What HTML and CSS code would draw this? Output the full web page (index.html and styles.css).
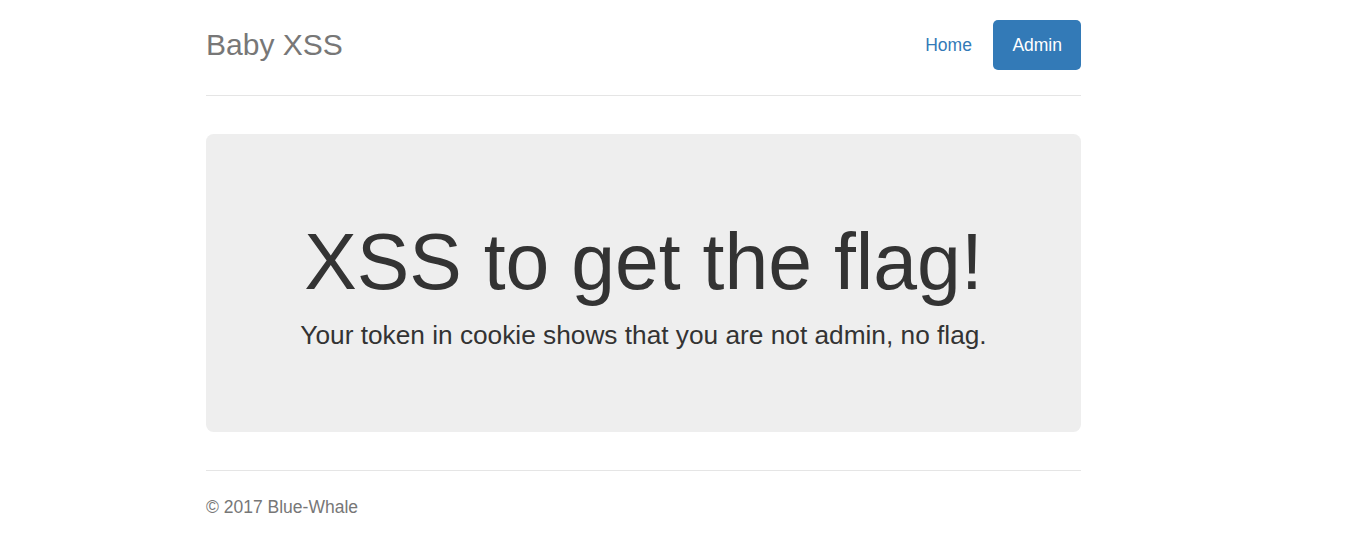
FILE: index.html
```html
<!DOCTYPE html>
<html lang="en">
<head>
<meta charset="utf-8">
<title>Baby XSS</title>
<link rel="stylesheet" href="styles.css">
</head>
<body>
<div class="container">
  <div class="header">
    <h3 class="brand">Baby XSS</h3>
    <ul class="nav-pills">
      <li><a class="pill" href="#">Home</a></li>
      <li><a class="pill active" href="#">Admin</a></li>
    </ul>
  </div>
  <div class="jumbotron">
    <h1 class="headline">XSS to get the flag!</h1>
    <p class="lead">Your token in cookie shows that you are not admin, no flag.</p>
  </div>
  <footer class="footer">
    <p class="copy">&copy; 2017 Blue-Whale</p>
  </footer>
</div>
</body>
</html>
```
FILE: styles.css
```css
* { box-sizing: border-box; }
html, body {
  margin: 0;
  padding: 0;
  background: #fff;
}
body {
  font-family: "Liberation Sans", Arial, Helvetica, sans-serif;
  font-size: 17.5px;
  line-height: 1.42857;
  color: #333;
  padding-top: 20px;
  padding-bottom: 25px;
}
.container {
  width: 875px;
  margin-left: 206px;
}
.header {
  display: flex;
  justify-content: space-between;
  align-items: flex-start;
  padding-bottom: 25px;
  border-bottom: 1px solid #e5e5e5;
  margin-bottom: 37.5px;
}
.brand {
  margin: 0;
  font-size: 30px;
  font-weight: 500;
  line-height: 50px;
  color: #777;
}
.nav-pills {
  display: flex;
  list-style: none;
  margin: 0;
  padding: 0;
}
.nav-pills li { margin-left: 2.5px; }
.pill {
  display: block;
  padding: 12.5px 19px;
  line-height: 25px;
  color: #337ab7;
  text-decoration: none;
  border-radius: 5px;
}
.pill.active {
  background: #337ab7;
  color: #fff;
}
.jumbotron {
  background: #eee;
  border-radius: 7.5px;
  padding: 60px 75px 59px;
  text-align: center;
  margin-bottom: 38px;
}
.headline {
  margin: 25px 0 11.5px;
  font-size: 78.75px;
  font-weight: 500;
  line-height: 1.1;
  color: #333;
}
.lead {
  margin: 0 0 18.75px;
  font-size: 26.25px;
  font-weight: 200;
  line-height: 1.42857;
}
.footer {
  padding-top: 23.75px;
  border-top: 1px solid #e5e5e5;
  color: #777;
}
.copy {
  margin: 0 0 12.5px;
  line-height: 25px;
}
```
